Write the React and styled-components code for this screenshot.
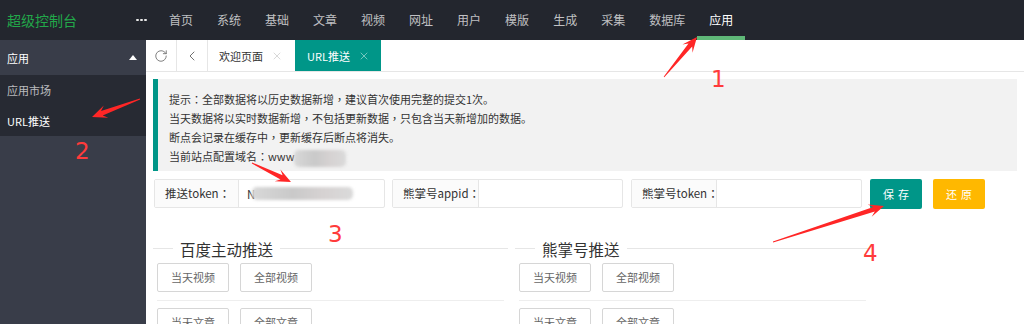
import React from 'react';
import styled, { createGlobalStyle } from 'styled-components';
import { RotateCw, ChevronLeft, X } from 'lucide-react';

const GlobalStyle = createGlobalStyle`
    html, body {
        margin: 0;
        padding: 0;
        background: #fff;
    }
    body {
        font-family: "Noto Sans CJK SC", "Noto Sans", sans-serif;
        color: #333;
    }
    * { box-sizing: border-box; }
`;

const Page = styled.div`
    position: relative;
    width: 1024px;
    height: 324px;
    overflow: hidden;
    display: flex;
    flex-direction: column;
`;

/* centred full-width punctuation, as the original font draws it */
const Punct = styled.span`
    font-family: "Noto Sans CJK TC", "Noto Sans CJK SC", sans-serif;
`;

const withPunct = text =>
    text.split(/([，：])/).map((part, i) =>
        /[，：]/.test(part) ? <Punct key={i}>{part}</Punct> : part
    );

/* ---------- header ---------- */
const Header = styled.div`
    height: 40px;
    flex: none;
    background: #23262e;
    display: flex;
    align-items: center;
`;

const Logo = styled.div`
    width: 130px;
    padding-left: 7px;
    font-size: 14px;
    line-height: 40px;
    color: #22a84a;
`;

const More = styled.div`
    width: 27px;
    display: flex;
    gap: 1.5px;
    padding-left: 6px;
    span {
        width: 2.5px;
        height: 2.5px;
        border-radius: 50%;
        background: #e8e8e8;
    }
`;

const Nav = styled.div`
    display: flex;
    height: 40px;
`;

const NavItem = styled.div`
    position: relative;
    padding: 0 12px;
    line-height: 40px;
    font-size: 12px;
    color: ${p => (p.$active ? '#fff' : 'rgba(255,255,255,.72)')};
    &::after {
        content: '';
        display: ${p => (p.$active ? 'block' : 'none')};
        position: absolute;
        left: 0;
        right: 0;
        bottom: 0;
        height: 4px;
        background: #5fb878;
    }
`;

/* ---------- body ---------- */
const Body = styled.div`
    flex: 1;
    display: flex;
    min-height: 0;
`;

const Sidebar = styled.div`
    width: 146px;
    flex: none;
    background: #393d49;
`;

const SideHead = styled.div`
    height: 35px;
    padding: 0 9px 0 7px;
    display: flex;
    align-items: center;
    justify-content: space-between;
    font-size: 11px;
    color: #fff;
`;

const Caret = styled.span`
    width: 0;
    height: 0;
    border-left: 4px solid transparent;
    border-right: 4px solid transparent;
    border-bottom: 5px solid #fff;
`;

const SubList = styled.div`
    background: rgba(0, 0, 0, .3);
`;

const SubItem = styled.div`
    height: 30.5px;
    line-height: 30.5px;
    padding-left: 7px;
    font-size: 11px;
    color: ${p => (p.$active ? '#fff' : 'rgba(255,255,255,.7)')};
`;

const Main = styled.div`
    flex: 1;
    display: flex;
    flex-direction: column;
    min-width: 0;
`;

/* ---------- tabs ---------- */
const TabBar = styled.div`
    height: 32px;
    flex: none;
    display: flex;
    border-bottom: 1px solid #e6e6e6;
    background: #fff;
`;

const TabTool = styled.div`
    width: 31px;
    display: flex;
    align-items: center;
    justify-content: center;
    border-right: 1px solid #e6e6e6;
    color: #666;
`;

const Tab = styled.div`
    display: flex;
    align-items: center;
    gap: 8px;
    padding: 0 ${p => (p.$active ? 11 : 12)}px 0 ${p => (p.$active ? 12 : 11)}px;
    font-size: 11px;
    background: ${p => (p.$active ? '#009688' : '#fff')};
    color: ${p => (p.$active ? '#fff' : '#333')};
    svg { color: ${p => (p.$active ? 'rgba(255,255,255,.7)' : '#c2c2c2')}; }
`;

const Content = styled.div`
    padding: 7px 7px 0;
`;

const Quote = styled.div`
    background: #f2f2f2;
    border-left: 5px solid #009688;
    padding: 11px 15px 4px 11px;
    font-size: 11px;
    line-height: 19px;
    color: #333;
`;

const Blur = styled.span`
    display: inline-block;
    vertical-align: middle;
    width: ${p => p.$w}px;
    height: ${p => p.$h}px;
    margin-left: ${p => p.$ml || 0}px;
    border-radius: 5px;
    background: linear-gradient(90deg, #d8d8d8, #c9c9c9 40%, #d6d2d2 70%, #dadada);
    filter: blur(1.5px);
`;

/* ---------- form ---------- */
const FormRow = styled.div`
    display: flex;
    align-items: center;
    margin: 8px 0 0 1px;
    height: 30px;
`;

const InputGroup = styled.div`
    width: 231px;
    height: 29px;
    display: flex;
    border: 1px solid #e6e6e6;
    border-radius: 2px;
    margin-right: ${p => p.$gap}px;
`;

const InputLabel = styled.div`
    width: ${p => p.$w}px;
    flex: none;
    background: #fbfbfb;
    border-right: 1px solid #e6e6e6;
    padding-left: 10px;
    font-size: 11.5px;
    line-height: 27px;
    white-space: nowrap;
    color: #333;
`;

const InputBox = styled.div`
    flex: 1;
    display: flex;
    align-items: center;
    padding-left: 8px;
    font-size: 11.5px;
    color: #333;
`;

const Btn = styled.div`
    width: 52px;
    height: 30px;
    display: flex;
    align-items: center;
    justify-content: center;
    border-radius: 2px;
    background: ${p => p.$bg};
    color: #fff;
    font-size: 11px;
    letter-spacing: 4px;
    padding-left: 4px;
    margin-right: 11px;
`;

/* ---------- fieldsets ---------- */
const Columns = styled.div`
    display: grid;
    grid-template-columns: 355px 355px;
    column-gap: 7px;
    margin-top: 30px;
`;

const Fieldset = styled.fieldset`
    margin: 0;
    padding: 0 4px;
    border: none;
    border-top: 1px solid #e6e6e6;
    min-width: 0;
`;

const Legend = styled.legend`
    margin-left: 16px;
    padding: 0 7px;
    font-size: 15.5px;
    line-height: 20px;
    color: #333;
`;

const BtnRow = styled.div`
    display: flex;
    gap: 11px;
    margin-top: 4px;
`;

const PlainBtn = styled.div`
    width: 72px;
    height: 29px;
    border: 1px solid #d6d6d6;
    border-radius: 2px;
    background: #fff;
    display: flex;
    align-items: center;
    justify-content: center;
    font-size: 11px;
    color: #666;
`;

const Divider = styled.div`
    height: 1px;
    background: #eee;
    margin: 8px 0 7px;
`;

/* ---------- annotations ---------- */
const Overlay = styled.svg`
    position: absolute;
    left: 0;
    top: 0;
    pointer-events: none;
`;

const Num = styled.text`
    font-family: "DejaVu Sans", sans-serif;
    font-size: 23px;
    fill: #ff3b3b;
`;

const arrow = (x1, y1, x2, y2) => {
    const dx = x2 - x1, dy = y2 - y1;
    const len = Math.hypot(dx, dy);
    const ux = dx / len, uy = dy / len;
    const nx = -uy, ny = ux;
    const head = 15, neck = head * 0.7, hw = 6.5, nw = 2.4, tw = 0.4;
    const bx = x2 - ux * head, by = y2 - uy * head;
    const kx = x2 - ux * neck, ky = y2 - uy * neck;
    const pts = [
        [x1 + nx * tw, y1 + ny * tw],
        [kx + nx * nw, ky + ny * nw],
        [bx + nx * hw, by + ny * hw],
        [x2, y2],
        [bx - nx * hw, by - ny * hw],
        [kx - nx * nw, ky - ny * nw],
        [x1 - nx * tw, y1 - ny * tw],
    ];
    return pts.map(p => p.map(v => v.toFixed(1)).join(',')).join(' ');
};

const navs = ['首页', '系统', '基础', '文章', '视频', '网址', '用户', '模版', '生成', '采集', '数据库', '应用'];

const Section = ({ title }) => (
    <Fieldset>
        <Legend>{title}</Legend>
        <BtnRow>
            <PlainBtn>当天视频</PlainBtn>
            <PlainBtn>全部视频</PlainBtn>
        </BtnRow>
        <Divider />
        <BtnRow>
            <PlainBtn>当天文章</PlainBtn>
            <PlainBtn>全部文章</PlainBtn>
        </BtnRow>
    </Fieldset>
);

const App = () => (
    <Page>
        <GlobalStyle />
        <Header>
            <Logo>超级控制台</Logo>
            <More><span /><span /><span /></More>
            <Nav>
                {navs.map(n => (
                    <NavItem key={n} $active={n === '应用'}>{n}</NavItem>
                ))}
            </Nav>
        </Header>
        <Body>
            <Sidebar>
                <SideHead>应用<Caret /></SideHead>
                <SubList>
                    <SubItem>应用市场</SubItem>
                    <SubItem $active>URL推送</SubItem>
                </SubList>
            </Sidebar>
            <Main>
                <TabBar>
                    <TabTool><RotateCw size={14} strokeWidth={1.4} /></TabTool>
                    <TabTool><ChevronLeft size={16} strokeWidth={1.4} /></TabTool>
                    <Tab>欢迎页面<X size={12} strokeWidth={1.3} /></Tab>
                    <Tab $active>URL推送<X size={12} strokeWidth={1.3} /></Tab>
                </TabBar>
                <Content>
                    <Quote>
                        <div>{withPunct('提示：全部数据将以历史数据新增，建议首次使用完整的提交1次。')}</div>
                        <div>{withPunct('当天数据将以实时数据新增，不包括更新数据，只包含当天新增加的数据。')}</div>
                        <div>{withPunct('断点会记录在缓存中，更新缓存后断点将消失。')}</div>
                        <div>{withPunct('当前站点配置域名：www')}<Blur $w={52} $h={17} /></div>
                    </Quote>
                    <FormRow>
                        <InputGroup $gap={7}>
                            <InputLabel $w={84}>推送token<Punct>：</Punct></InputLabel>
                            <InputBox>N<Blur $w={101} $h={13} $ml={-3} /></InputBox>
                        </InputGroup>
                        <InputGroup $gap={8}>
                            <InputLabel $w={86}>熊掌号appid<Punct>：</Punct></InputLabel>
                            <InputBox />
                        </InputGroup>
                        <InputGroup $gap={8}>
                            <InputLabel $w={85}>熊掌号token<Punct>：</Punct></InputLabel>
                            <InputBox />
                        </InputGroup>
                        <Btn $bg="#009688">保存</Btn>
                        <Btn $bg="#ffb800">还原</Btn>
                    </FormRow>
                    <Columns>
                        <Section title="百度主动推送" />
                        <Section title="熊掌号推送" />
                    </Columns>
                </Content>
            </Main>
        </Body>
        <Overlay width="1024" height="324" viewBox="0 0 1024 324">
            <g fill="#ff2626">
                <polygon points={arrow(664, 77, 697, 37)} />
                <polygon points={arrow(140, 99, 92, 117)} />
                <polygon points={arrow(252, 163, 291, 182)} />
                <polygon points={arrow(773, 242, 884, 206)} />
            </g>
            <Num x="711" y="87">1</Num>
            <Num x="75" y="159">2</Num>
            <Num x="328" y="242">3</Num>
            <Num x="863" y="261">4</Num>
        </Overlay>
    </Page>
);

export default App;
